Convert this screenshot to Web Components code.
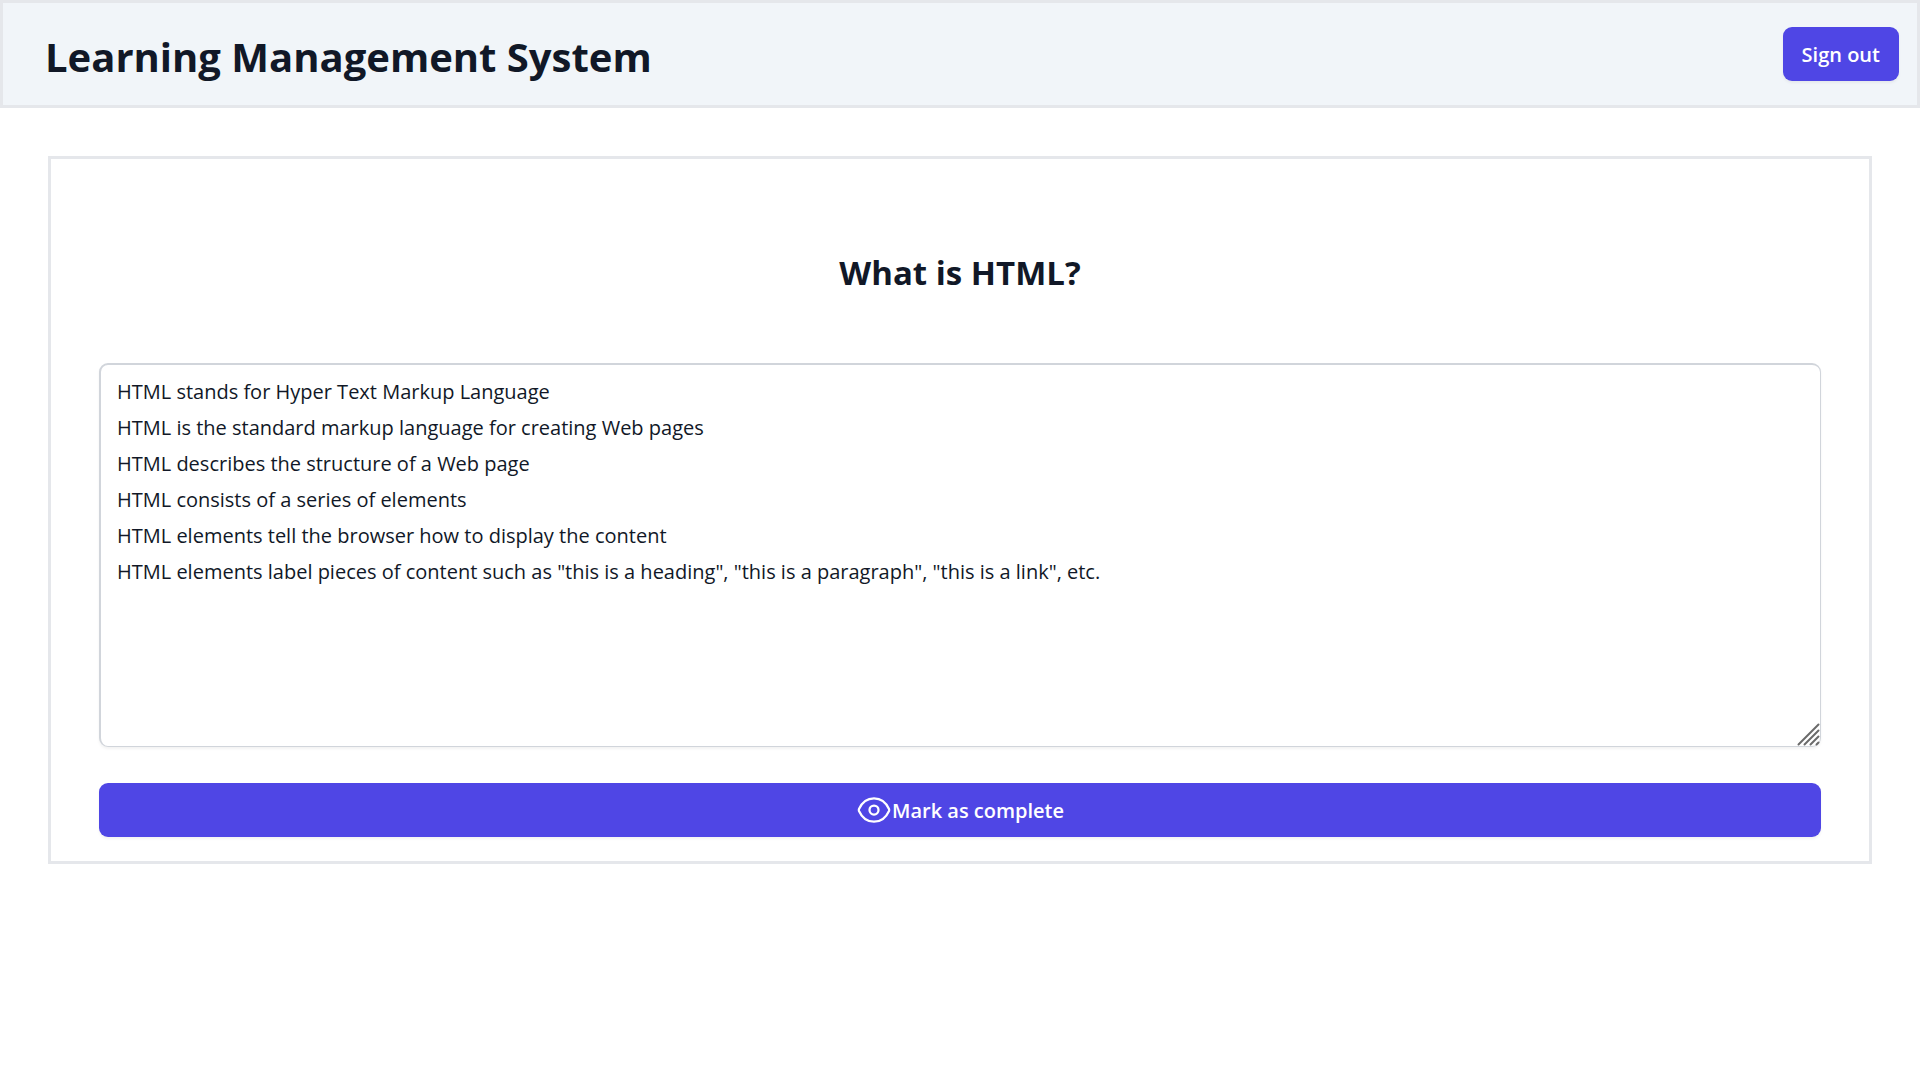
<!DOCTYPE html>
<html lang="en">
<head>
<meta charset="utf-8">
<title>Learning Management System</title>
<style>
  body { margin: 0; background: #fff; color: #111827; font-family: "Open Sans", "Noto Sans", sans-serif; }
</style>
</head>
<body>
<lms-app></lms-app>
<script>
const define = (name, html, init) => {
  const template = document.createElement('template');
  template.innerHTML = html;
  customElements.define(name, class extends HTMLElement {
    constructor() {
      super();
      this.attachShadow({ mode: 'open' }).append(template.content.cloneNode(true));
      if (init) init(this);
    }
  });
};

define('lms-button', `
  <style>
    :host { display: block; }
    button {
      display: flex; align-items: center; justify-content: center;
      box-sizing: border-box; width: 100%; margin: 0; padding: 10px 19px 8px;
      border: 0; border-radius: 9px; background: #4f46e5; color: #fff;
      font-family: inherit; font-size: 20px; font-weight: 600; line-height: 36px;
      box-shadow: 0 2px 3px rgb(0 0 0 / 5%); cursor: pointer;
    }
    button:hover { background: #6366f1; }
  </style>
  <button type="button"><slot name="icon"></slot><slot></slot></button>`);

define('eye-icon', `
  <style>
    :host { display: block; width: 36px; height: 36px; }
    svg { display: block; width: 100%; height: 100%; }
  </style>
  <svg viewBox="0 0 36 36" fill="none" stroke="currentColor" stroke-width="2.250" aria-hidden="true">
    <path d="M3 16C6.200 8.800 11.400 5.300 18 5.300s11.800 3.500 15 10.700q.4 1 0 2C29.800 25.200 24.600 28.700 18 28.700S6.200 25.200 3 18q-.4-1 0-2Z"/>
    <circle cx="18" cy="17" r="4.500"/>
  </svg>`);

define('lms-header', `
  <style>
    :host { display: flex; align-items: center; justify-content: space-between;
      padding: 24px 18px 24px 42px; border: 3px solid #e5e7eb; background: #f1f5f9; }
    h1 { margin: 0; padding-top: 6px; font-size: 40px; line-height: 48px; font-weight: 700; }
  </style>
  <h1><slot></slot></h1>
  <slot name="action"></slot>`);

define('lesson-notes', `
  <style>
    :host { display: grid; }
    textarea, svg { grid-area: 1 / 1; }
    textarea {
      display: block; box-sizing: border-box; width: 100%; height: 384px; margin: 0;
      padding: 9px 16px; border: solid #d1d5db; border-width: 2px 1px 1px 2px; border-radius: 9px;
      background: #fff; color: #111827; font-family: inherit; font-size: 20px; line-height: 36px;
      box-shadow: 0 2px 3px rgb(0 0 0 / 5%); resize: vertical; outline: none;
    }
    textarea::-webkit-resizer { background: transparent; }
    svg { align-self: end; justify-self: end; width: 24px; height: 24px; pointer-events: none; z-index: 1; }
  </style>
  <textarea aria-label="Lesson content"></textarea>
  <svg viewBox="0 0 24 24" stroke="#6b6b6b" stroke-width="2" stroke-linecap="round" aria-hidden="true">
    <path d="M1.500 21.500L21.500 1.500M7.500 21.500L21.500 7.500M13.500 21.500L21.500 13.500M19.500 21.500L21.500 19.500"/>
  </svg>`,
  el => { el.shadowRoot.querySelector('textarea').value = [
    'HTML stands for Hyper Text Markup Language',
    'HTML is the standard markup language for creating Web pages',
    'HTML describes the structure of a Web page',
    'HTML consists of a series of elements',
    'HTML elements tell the browser how to display the content',
    'HTML elements label pieces of content such as "this is a heading", "this is a paragraph", "this is a link", etc.'
  ].join('\n'); });

define('lesson-card', `
  <style>
    :host { display: flex; flex-direction: column; margin: 48px; padding: 90px 48px 24px; border: 3px solid #e5e7eb; }
    h2 { margin: 0 0 66px; font-size: 33px; line-height: 48px; font-weight: 700; text-align: center; }
    .body { display: flex; flex-direction: column; gap: 36px; }
  </style>
  <h2><slot name="title"></slot></h2>
  <div class="body"><slot></slot></div>`);

define('lms-app', `
  <style>:host { display: block; }</style>
  <header><lms-header>Learning Management System<lms-button slot="action">Sign out</lms-button></lms-header></header>
  <main>
    <lesson-card>
      <span slot="title">What is HTML?</span>
      <lesson-notes></lesson-notes>
      <lms-button><eye-icon slot="icon"></eye-icon>Mark as complete</lms-button>
    </lesson-card>
  </main>`);
</script>
</body>
</html>
